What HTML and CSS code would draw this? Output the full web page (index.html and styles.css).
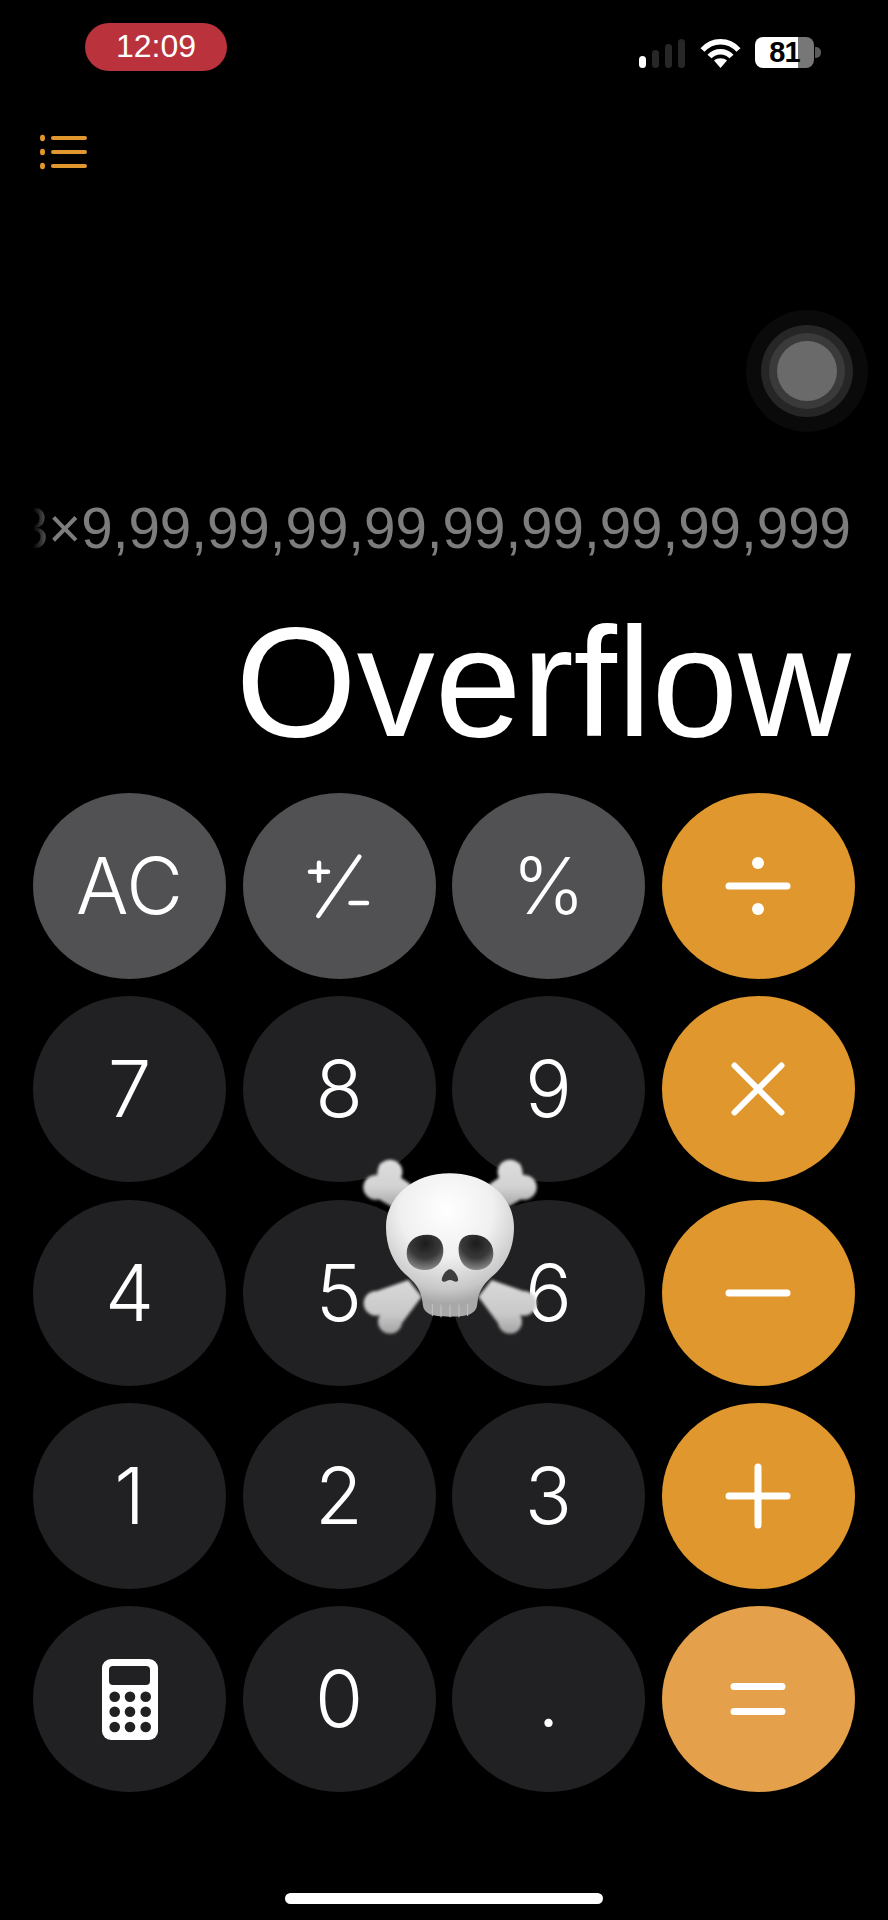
FILE: index.html
```html
<!DOCTYPE html>
<html lang="en">
<head>
<meta charset="utf-8">
<title>Calculator</title>
<link rel="stylesheet" href="styles.css">
</head>
<body>
<main class="screen">
  <header class="status">
    <div class="time">12:09</div>
    <div class="indicators">
      <svg class="signal" viewBox="0 0 46 29" aria-hidden="true">
        <rect class="bar on" x="0" y="17" width="7" height="12" rx="3.5"/>
        <rect class="bar" x="13" y="11" width="7" height="18" rx="3.5"/>
        <rect class="bar" x="26" y="5" width="7" height="24" rx="3.5"/>
        <rect class="bar" x="39" y="0" width="7" height="29" rx="3.5"/>
      </svg>
      <svg class="wifi" viewBox="0 0 41 30" aria-hidden="true">
        <path class="arc" d="M2.5 12 C12.5 1 28.5 1 38.5 12"/>
        <path class="arc" d="M9.5 18.5 C15.5 12 25.5 12 31.5 18.5"/>
        <path class="wedge" d="M20.5 30 L14 22.5 C17.5 19.5 23.5 19.5 27 22.5 Z"/>
      </svg>
      <div class="battery">
        <div class="cell">81</div>
        <div class="nub"></div>
      </div>
    </div>
  </header>

  <div class="toolbar">
    <svg class="list-icon" viewBox="0 0 47 36" aria-hidden="true">
      <ellipse cx="2.5" cy="4" rx="2.5" ry="3.2"/>
      <ellipse cx="2.5" cy="18" rx="2.5" ry="3.2"/>
      <ellipse cx="2.5" cy="32" rx="2.5" ry="3.2"/>
      <rect x="11" y="2" width="36" height="4" rx="2"/>
      <rect x="11" y="16" width="36" height="4" rx="2"/>
      <rect x="11" y="30" width="36" height="4" rx="2"/>
    </svg>
  </div>

  <section class="display">
    <div class="expression"><span>3×9,99,99,99,99,99,99,99,99,999</span></div>
    <div class="result">Overflow</div>
  </section>

  <section class="keypad">
    <div class="key fn">AC</div>
    <div class="key fn">
      <svg class="glyph" viewBox="-40 -40 80 80" aria-label="plus minus">
        <path class="thin" d="M-29 -14.3H-11M-20 -23.3V-5.3M-20.7 30L20.3 -29.3M11.5 17H28"/>
      </svg>
    </div>
    <div class="key fn">%</div>
    <div class="key op">
      <svg class="glyph" viewBox="-40 -40 80 80" aria-label="divide">
        <path d="M-29 0H29"/><circle cy="-23" r="6"/><circle cy="23" r="6"/>
      </svg>
    </div>

    <div class="key">7</div>
    <div class="key">8</div>
    <div class="key">9</div>
    <div class="key op">
      <svg class="glyph" viewBox="-40 -40 80 80" aria-label="multiply">
        <path class="mid" d="M-23.5 -23.5L23.5 23.5M23.5 -23.5L-23.5 23.5"/>
      </svg>
    </div>

    <div class="key">4</div>
    <div class="key">5</div>
    <div class="key">6</div>
    <div class="key op">
      <svg class="glyph" viewBox="-40 -40 80 80" aria-label="subtract">
        <path d="M-29 0H29"/>
      </svg>
    </div>

    <div class="key">1</div>
    <div class="key">2</div>
    <div class="key">3</div>
    <div class="key op">
      <svg class="glyph" viewBox="-40 -40 80 80" aria-label="add">
        <path d="M-29 0H29M0 -29V29"/>
      </svg>
    </div>

    <div class="key">
      <svg class="calc-icon" viewBox="0 0 56 81" aria-label="calculator">
        <rect class="calc-body" width="56" height="81" rx="9"/>
        <rect class="calc-hole" x="7" y="7" width="41" height="19" rx="4"/>
        <circle class="calc-hole" cx="12.7" cy="37.7" r="5.3"/>
        <circle class="calc-hole" cx="28" cy="37.7" r="5.3"/>
        <circle class="calc-hole" cx="43.7" cy="37.7" r="5.3"/>
        <circle class="calc-hole" cx="12.7" cy="52.7" r="5.3"/>
        <circle class="calc-hole" cx="28" cy="52.7" r="5.3"/>
        <circle class="calc-hole" cx="43.7" cy="52.7" r="5.3"/>
        <circle class="calc-hole" cx="12.7" cy="68" r="5.3"/>
        <circle class="calc-hole" cx="28" cy="68" r="5.3"/>
        <circle class="calc-hole" cx="43.7" cy="68" r="5.3"/>
      </svg>
    </div>
    <div class="key">0</div>
    <div class="key">.</div>
    <div class="key op active">
      <svg class="glyph" viewBox="-40 -40 80 80" aria-label="equals">
        <path d="M-24 -12.5H24M-24 12.5H24"/>
      </svg>
    </div>
  </section>

  <div class="home-bar"></div>

  <div class="assistive" aria-hidden="true">
    <div class="ring r2"><div class="ring r3"><div class="ring r4"></div></div></div>
  </div>

  <svg class="skull" viewBox="0 0 660 660" role="img" aria-label="skull and crossbones">
    <defs>
      <linearGradient id="boneTop" gradientUnits="userSpaceOnUse" x1="0" y1="55" x2="0" y2="200">
        <stop offset="0" stop-color="#dedede"/>
        <stop offset=".6" stop-color="#d2d2d2"/>
        <stop offset="1" stop-color="#a6a6a6"/>
      </linearGradient>
      <linearGradient id="boneLow" gradientUnits="userSpaceOnUse" x1="0" y1="430" x2="0" y2="585">
        <stop offset="0" stop-color="#d8d8d8"/>
        <stop offset=".6" stop-color="#c8c8c8"/>
        <stop offset="1" stop-color="#a0a0a0"/>
      </linearGradient>
      <radialGradient id="head" gradientUnits="userSpaceOnUse" cx="320" cy="210" r="280">
        <stop offset="0" stop-color="#ffffff"/>
        <stop offset=".5" stop-color="#f0f0f0"/>
        <stop offset=".85" stop-color="#c8c8c8"/>
        <stop offset="1" stop-color="#a8a8a8"/>
      </radialGradient>
      <radialGradient id="socket" cx="50%" cy="25%" r="85%">
        <stop offset="0" stop-color="#1c1c1c"/>
        <stop offset=".5" stop-color="#3a3a3a"/>
        <stop offset="1" stop-color="#a0a0a0"/>
      </radialGradient>
      <filter id="soft" x="-10%" y="-10%" width="120%" height="120%"><feGaussianBlur stdDeviation="4"/></filter>
      <filter id="softer" x="-10%" y="-10%" width="120%" height="120%"><feGaussianBlur stdDeviation="2"/></filter>
    </defs>
    <g filter="url(#soft)" fill="url(#boneTop)" stroke="url(#boneTop)">
      <circle cx="107" cy="142" r="37" stroke="none"/>
      <circle cx="150" cy="96" r="37" stroke="none"/>
      <path stroke="none" d="M95 165L120 70L215 135L155 200Z"/>
      <circle cx="553" cy="142" r="37" stroke="none"/>
      <circle cx="510" cy="96" r="37" stroke="none"/>
      <path stroke="none" d="M565 165L540 70L445 135L505 200Z"/>
    </g>
    <g filter="url(#soft)" fill="url(#boneLow)">
      <circle cx="108" cy="490" r="37"/>
      <circle cx="150" cy="545" r="36"/>
      <path d="M85 462L205 420L245 470L178 560L120 520Z"/>
      <circle cx="552" cy="490" r="37"/>
      <circle cx="510" cy="545" r="36"/>
      <path d="M575 462L455 420L415 470L482 560L540 520Z"/>
    </g>
    <g filter="url(#softer)">
      <path fill="url(#head)" d="M330 100C220 100 138 170 138 262C138 320 160 370 195 402C222 425 244 445 248 490C250 520 270 530 330 530C390 530 410 520 412 490C416 445 438 425 465 402C500 370 522 320 522 262C522 170 440 100 330 100Z"/>
    </g>
    <path fill="url(#socket)" filter="url(#softer)" d="M200 340C200 305 225 284 262 284C295 284 312 305 310 335C308 368 285 392 250 390C220 388 200 370 200 340Z"/>
    <path fill="url(#socket)" filter="url(#softer)" d="M460 340C460 305 435 284 398 284C365 284 354 305 356 335C358 368 380 392 412 390C442 388 460 370 460 340Z"/>
    <path fill="#3c3c3c" filter="url(#softer)" d="M330 388C318 388 303 412 306 422C312 430 322 420 330 420C338 420 348 430 354 422C357 412 342 388 330 388Z"/>
    <path class="teeth" d="M277 492V528M303 494V532M330 494V532M357 494V532M383 492V528"/>
  </svg>
</main>
</body>
</html>
```

FILE: styles.css
```css
* { box-sizing: border-box; }

html, body {
  margin: 0;
  background: #000;
}

.screen {
  position: relative;
  width: 888px;
  height: 1920px;
  overflow: hidden;
  background: #000;
  color: #fff;
  font-family: "Liberation Sans", Arial, sans-serif;
}

/* Status bar */
.status {
  display: flex;
  justify-content: space-between;
  align-items: flex-start;
  height: 71px;
  padding: 23px 67px 0 85px;
}

.time {
  width: 142px;
  height: 48px;
  border-radius: 24px;
  background: #b9323c;
  font-size: 32px;
  line-height: 47px;
  text-align: center;
}

.indicators {
  display: flex;
  align-items: flex-end;
  height: 31px;
  margin-top: 14px;
}

.signal { width: 46px; height: 29px; margin-right: 15px; }
.bar { fill: #272727; }
.bar.on { fill: #fff; }

.wifi { width: 41px; height: 30px; margin-right: 14px; }
.arc { fill: none; stroke: #fff; stroke-width: 5.5; }
.wedge { fill: #fff; }

.battery {
  display: flex;
  align-items: center;
  width: 66px;
  height: 31px;
}

.cell {
  width: 59px;
  height: 31px;
  border-radius: 8px;
  background: linear-gradient(90deg, #fff 0, #fff 43px, #777 43px);
  color: #000;
  font-size: 29px;
  font-weight: 700;
  letter-spacing: -1px;
  line-height: 31px;
  text-align: center;
}

.nub {
  width: 6px;
  height: 11px;
  margin-left: 1px;
  border-radius: 0 5px 5px 0;
  background: #5a5a5a;
}

/* Toolbar */
.toolbar {
  display: flex;
  height: 36px;
  margin-top: 63px;
  padding-left: 40px;
}

.list-icon { width: 47px; height: 36px; fill: #e0982e; }

/* Display */
.display {
  margin-top: 329px;
  padding-right: 37px;
}

.expression {
  display: flex;
  justify-content: flex-end;
  height: 60px;
  margin-left: 33px;
  overflow: hidden;
  color: #7d7d7d;
  font-size: 56.5px;
  line-height: 60px;
  white-space: nowrap;
  -webkit-mask-image: linear-gradient(90deg, transparent 0, #000 20px);
  mask-image: linear-gradient(90deg, transparent 0, #000 20px);
}

.expression span { flex: none; }

.result {
  height: 160px;
  margin-top: 43px;
  font-size: 156px;
  line-height: 160px;
  text-align: right;
  white-space: nowrap;
}

/* Keypad */
.keypad {
  display: grid;
  grid-template-columns: repeat(4, 193px);
  grid-auto-rows: 186px;
  column-gap: 16.5px;
  row-gap: 17.25px;
  margin-top: 31px;
  padding-left: 33px;
}

.key {
  display: flex;
  align-items: center;
  justify-content: center;
  border-radius: 50%;
  background: #212123;
  font-family: Inter, "Liberation Sans", sans-serif;
  font-size: 78px;
  font-weight: 300;
  line-height: 1;
}

.key.fn { background: #515153; }
.key.op { background: #e0982e; }
.key.op.active { background: #e4a04a; }

.glyph { width: 80px; height: 80px; }
.glyph path { fill: none; stroke: #fff; stroke-width: 7; stroke-linecap: round; }
.glyph circle { fill: #fff; }
.glyph path.thin { stroke-width: 4.5; }
.glyph path.mid { stroke-width: 6; }

.calc-icon { width: 56px; height: 81px; }
.calc-body { fill: #fff; }
.calc-hole { fill: #212123; }

/* Home indicator */
.home-bar {
  width: 318px;
  height: 11px;
  margin: 101px auto 0;
  border-radius: 6px;
  background: #fff;
}

/* Floating AssistiveTouch button */
.assistive {
  position: absolute;
  left: 746px;
  top: 310px;
  display: flex;
  align-items: center;
  justify-content: center;
  width: 122px;
  height: 122px;
  border-radius: 50%;
  background: #0b0a0b;
}

.ring {
  display: flex;
  align-items: center;
  justify-content: center;
  border-radius: 50%;
}

.r2 { width: 92px; height: 92px; background: #262627; }
.r3 { width: 76px; height: 76px; background: #3a3a3b; }
.r4 { width: 60px; height: 60px; background: #6b6a6b; }

/* Emoji overlay */
.skull {
  position: absolute;
  left: 340px;
  top: 1140px;
  width: 220px;
  height: 220px;
}

.teeth { fill: none; stroke: #c4c4c4; stroke-width: 3; }
```
